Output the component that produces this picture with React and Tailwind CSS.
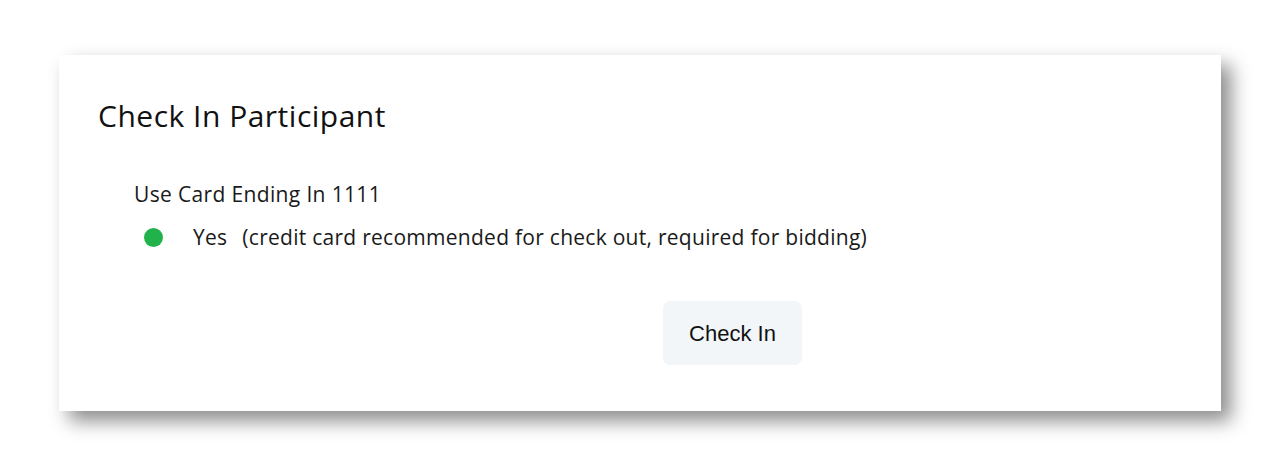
export default function App() {
  return (
    <div className="w-[1280px] h-[472px] bg-white pt-[55px] pl-[59px]" style={{ fontFamily: "'Open Sans', Roboto, sans-serif" }}>
      <div className="w-[1162px] h-[356px] bg-white shadow-[10px_10px_18px_rgba(0,0,0,0.45)] flex flex-col pt-[100px] relative">
        <div className="absolute left-[39px] top-[41px] text-[30px] leading-[40px] tracking-[0.5px] text-[#111]">Check In Participant</div>
        <div className="pl-[75px] text-[21px] leading-[28px] tracking-[0.35px] text-[#1a1a1a] mt-[25px]">Use Card Ending In 1111</div>
        <div className="pl-[85px] flex items-center mt-[15px] text-[21px] leading-[28px] tracking-[0.27px] text-[#1a1a1a]">
          <span className="w-[19px] h-[19px] rounded-full bg-[#22b24c] inline-block"></span>
          <span className="ml-[30px]">Yes</span>
          <span className="ml-[15px]">(credit card recommended for check out, required for bidding)</span>
        </div>
        <div className="pl-[604px] mt-[50px]">
          <button className="w-[139px] h-[64px] rounded-[7px] bg-[#f3f6f9] text-[22px] text-[#111]" style={{ fontFamily: "'Liberation Sans', Arial, sans-serif" }}>Check In</button>
        </div>
      </div>
    </div>
  );
}
